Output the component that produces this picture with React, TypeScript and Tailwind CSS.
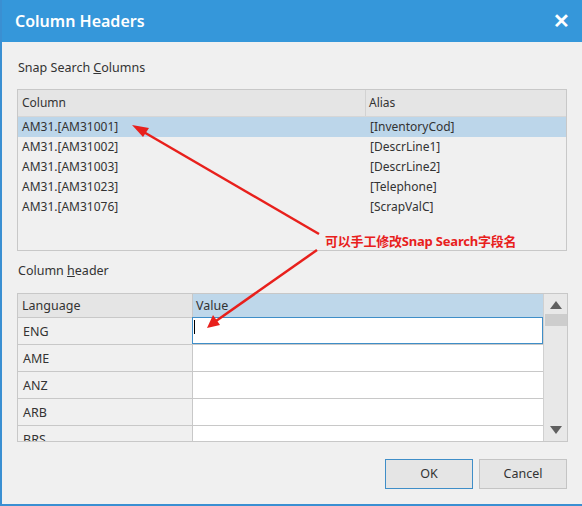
import React from "react";

const topRows = [
  ["AM31.[AM31001]", "[InventoryCod]"],
  ["AM31.[AM31002]", "[DescrLine1]"],
  ["AM31.[AM31003]", "[DescrLine2]"],
  ["AM31.[AM31023]", "[Telephone]"],
  ["AM31.[AM31076]", "[ScrapValC]"],
];

const langs = ["ENG", "AME", "ANZ", "ARB", "BRS"];

export default function App() {
  return (
    <div
      className="relative w-[582px] h-[506px] overflow-hidden bg-[#f0f0f0] border-l-2 border-b-2 border-[#3a8fd2] text-[#333333]"
      style={{ fontFamily: '"Noto Sans", "Open Sans", "Noto Sans CJK SC", sans-serif' }}
    >
      {/* Title bar */}
      <div className="h-[42px] bg-[#3597da] flex items-center justify-between pl-[13px] pr-[12px]">
        <span className="text-white text-[16px] font-semibold">Column Headers</span>
        <span className="text-white text-[20px] font-bold leading-none">✕</span>
      </div>

      <div className="pl-[15px] pr-[15px]">
        <div className="mt-[16px] h-[20px] flex items-center text-[12.5px] pl-[1px]">
          Snap Search&nbsp;<span className="underline">C</span>olumns
        </div>

        {/* Top grid */}
        <div className="mt-[11px] w-[550px] h-[162px] border border-[#c8c8c8] bg-[#f0f0f0] text-[12px]">
          <div className="flex h-[27px] bg-[#e5e5e5] border-b border-[#d6d6d6]">
            <div className="w-[348px] border-r border-[#d2d2d2] flex items-center pl-[4px]">Column</div>
            <div className="flex-1 flex items-center pl-[3px]">Alias</div>
          </div>
          {topRows.map((r, i) => (
            <div
              key={i}
              className={`flex h-[20px] items-center ${i === 0 ? "bg-[#bcd6ea]" : ""}`}
            >
              <div className="w-[348px] pl-[4px]">{r[0]}</div>
              <div className="flex-1 pl-[4px]">{r[1]}</div>
            </div>
          ))}
        </div>

        <div className="mt-[10px] h-[20px] flex items-center text-[12.5px] pl-[1px]">
          Column&nbsp;<span className="underline">h</span>eader
        </div>

        {/* Bottom grid */}
        <div className="mt-[12px] w-[551px] h-[149px] border border-[#c8c8c8] flex text-[12.5px] overflow-hidden">
          <div className="w-[526px] flex flex-col">
            <div className="flex h-[24px] shrink-0 border-b border-[#c8c8c8]">
              <div className="w-[175px] bg-[#e5e5e5] border-r border-[#c8c8c8] flex items-center pl-[4px] pt-[2px]">Language</div>
              <div className="flex-1 bg-[#bed7ea] flex items-center pl-[3px] pt-[2px]">Value</div>
            </div>
            {langs.map((l, i) => (
              <div key={l} className="flex h-[27px] shrink-0 border-b border-[#c8c8c8]">
                <div className="w-[175px] bg-[#f0f0f0] border-r border-[#c8c8c8] flex items-center pl-[5px] pt-[3px]">{l}</div>
                <div
                  className={`flex-1 bg-white ${i === 0 ? "border border-[#3f8ec8] -mt-[1px] -ml-[1px] flex items-start pt-[2px] pl-[1px]" : ""}`}
                >
                  {i === 0 && <div className="w-[1px] h-[14px] bg-black" />}
                </div>
              </div>
            ))}
          </div>
          <div className="w-[24px] bg-[#e8e8e8] border-l border-[#d0d0d0] relative">
            <svg className="absolute left-[6px] top-[7px]" width="12" height="8" viewBox="0 0 12 8">
              <polygon points="6,0 12,8 0,8" fill="#606060" />
            </svg>
            <div className="absolute left-[1px] right-0 top-[20px] h-[12px] bg-[#cdcdcd]" />
            <svg className="absolute left-[6px] bottom-[7px]" width="12" height="8" viewBox="0 0 12 8">
              <polygon points="0,0 12,0 6,8" fill="#606060" />
            </svg>
          </div>
        </div>

        {/* Buttons */}
        <div className="mt-[17px] flex justify-end gap-[6px] w-[550px] text-[12.5px]">
          <button className="w-[88px] h-[30px] bg-[#e5e5e5] border border-[#3f8ec8] flex items-center justify-center">OK</button>
          <button className="w-[88px] h-[30px] bg-[#e5e5e5] border border-[#c4c4c4] flex items-center justify-center">Cancel</button>
        </div>
      </div>

      {/* Annotation */}
      <svg className="absolute left-0 top-0 pointer-events-none" width="582" height="506" viewBox="0 0 582 506">
        <line x1="317" y1="234" x2="140" y2="131" stroke="#e8201c" strokeWidth="2.5" />
        <polygon points="130,125 147,128 141,137" fill="#e8201c" />
        <line x1="315" y1="250" x2="214" y2="321" stroke="#e8201c" strokeWidth="2.5" />
        <polygon points="205,328 211,315 218,325" fill="#e8201c" />
      </svg>
      <div
        className="absolute left-[323px] top-[232px] text-[13px] font-bold text-[#e8201c] whitespace-nowrap tracking-[-0.2px]"
        style={{ fontFamily: '"Noto Sans", "Noto Sans CJK SC", sans-serif' }}
      >
        可以手工修改Snap Search字段名
      </div>
    </div>
  );
}
